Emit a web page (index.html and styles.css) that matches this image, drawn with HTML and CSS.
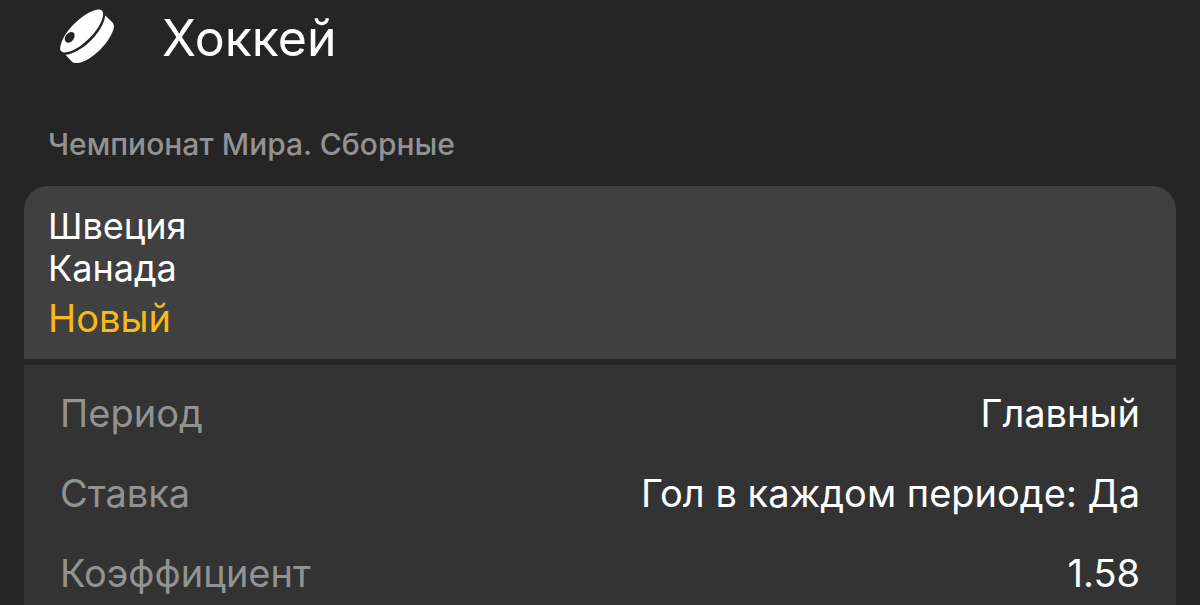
FILE: index.html
```html
<!DOCTYPE html>
<html lang="ru">
<head>
<meta charset="utf-8">
<meta name="viewport" content="width=device-width, initial-scale=1">
<title>Хоккей</title>
<link rel="stylesheet" href="styles.css">
</head>
<body>
<main class="page">
  <header class="sport">
    <svg class="sport-icon" viewBox="0 0 60 60" aria-hidden="true">
      <path d="M4.200 41C4 26 29 2 43 1.500C47 1.500 47.800 5 46.500 10C43 23 25 41 12 44C7 45 4.500 44 4.200 41Z"/>
      <path d="M49.300 7.500L56 14C58 16 58.400 18 57.500 21C54 34 36 53 22 55C19 55.400 17 54.800 15.500 53.200L9.500 46.800C24 46 47 25 49.300 7.500Z"/>
      <ellipse class="sport-icon-mark" cx="13.700" cy="29.300" rx="4.200" ry="6" transform="rotate(38 13.700 29.300)"/>
    </svg>
    <h1 class="sport-title">Хоккей</h1>
  </header>
  <h2 class="league">Чемпионат Мира. Сборные</h2>
  <section class="bet">
    <div class="match">
      <p class="team">Швеция</p>
      <p class="team">Канада</p>
      <p class="status">Новый</p>
    </div>
    <dl class="details">
      <div class="row"><dt>Период</dt><dd>Главный</dd></div>
      <div class="row"><dt>Ставка</dt><dd>Гол в каждом периоде: Да</dd></div>
      <div class="row"><dt>Коэффициент</dt><dd>1.58</dd></div>
    </dl>
  </section>
</main>
</body>
</html>
```
FILE: styles.css
```css
* { box-sizing: border-box; }
body, h1, h2, p, dl, dd { margin: 0; }
body {
  background: #252525;
  color: #fff;
  font-family: Inter, "Noto Sans", sans-serif;
  overflow: hidden;
}
.page { padding: 0 24px; }
.sport { display: flex; align-items: center; gap: 46px; padding: 8px 0 8px 32px; }
.sport-icon { width: 60px; height: 60px; fill: #fff; }
.sport-icon-mark { fill: #252525; }
.sport-title { font-size: 50px; line-height: 60px; font-weight: 400; }
.league { margin-top: 50px; padding-left: 24px; font-size: 30px; line-height: 36px; font-weight: 500; color: #929292; }
.bet { margin-top: 24px; }
.match { padding: 19px 24px 17px; background: #404040; border-radius: 24px 24px 0 0; }
.team { font-size: 36px; line-height: 42px; }
.status { margin-top: 5px; font-size: 38px; line-height: 48px; color: #fdb913; }
.details { margin-top: 6px; padding: 8px 36px; background: #333; }
.row { display: flex; justify-content: space-between; gap: 24px; font-size: 38px; line-height: 80px; }
.row dt { color: #929292; }
```
